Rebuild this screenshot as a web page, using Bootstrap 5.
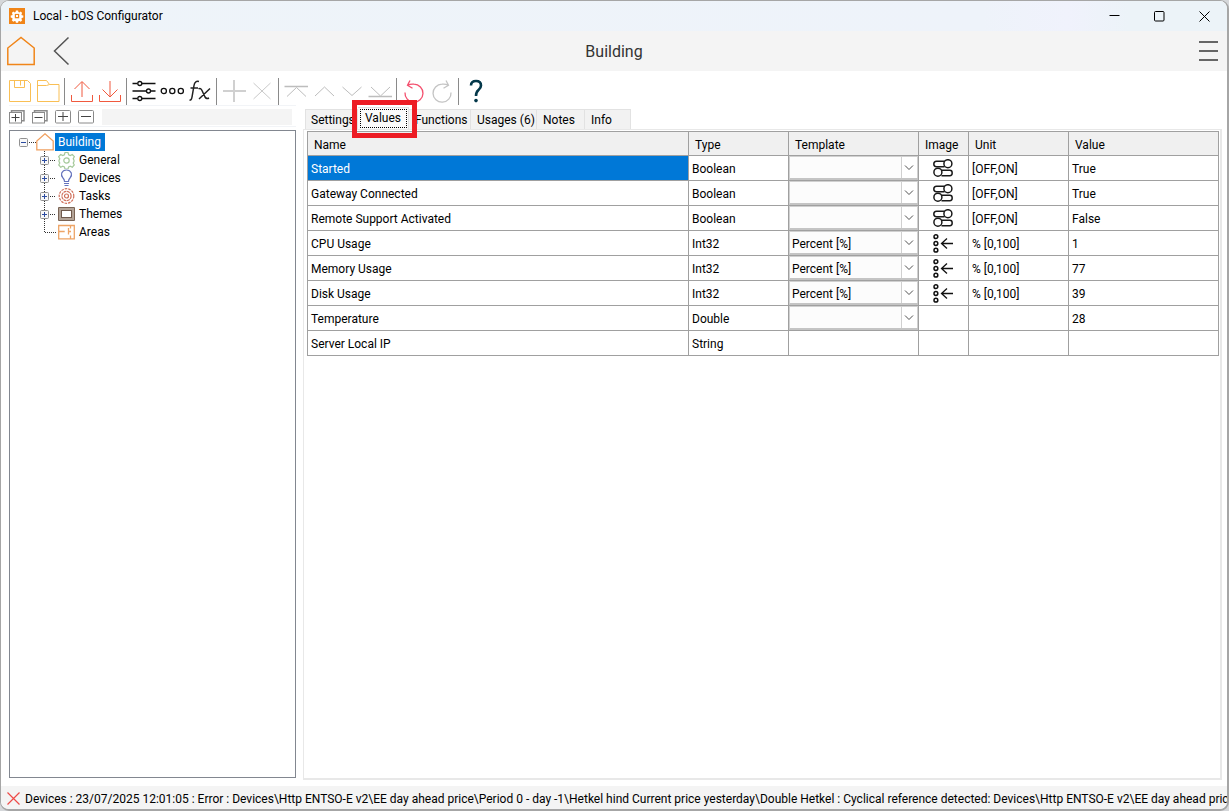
<!DOCTYPE html>
<html lang="en">
<head>
<meta charset="utf-8">
<meta name="viewport" content="width=device-width, initial-scale=1">
<title>Local - bOS Configurator</title>
<link href="https://cdn.jsdelivr.net/npm/bootstrap@5.3.0/dist/css/bootstrap.min.css" rel="stylesheet">
<style>
  :root { --line: #a0a0a0; --accent: #0078d7; --chrome: #f4f4f4; }
  body { font-family: Roboto, "Open Sans", sans-serif; font-size: 12px; line-height: 16px; color: #000; background: #d5d7da; }
  svg { display: block; fill: none; flex: none; }
  .app-window { border: 1px solid #a6a6a6; border-width: 1px 2px 2px 1px; border-radius: 9px; background: #fff; }
  .title-bar { height: 30px; background: linear-gradient(90deg, #eef4f9, #eef3fa 80%, #f0f2fc 87%, #ecf3f8 92%); padding-left: 8px; }
  .win-btn { width: 45px; height: 29px; }
  .plain-btn { border: 0; background: none; padding: 0; display: flex; align-items: center; justify-content: center; color: inherit; }
  .head-bar { height: 40px; background: var(--chrome); padding: 0 5px; display: grid; grid-template-columns: 1fr auto 1fr; }
  .head-bar h1 { font-size: 16px; line-height: 24px; font-weight: 400; color: #333; padding-top: 2px; }
  .back-btn { margin-left: 16px; }
  .tool-bar { height: 34px; padding: 6px 0 0 5px; }
  .tool-bar button { width: 28px; height: 28px; }
  .tool-sep { width: 1px; height: 27px; background: #8a8a8a; margin: 0 3px 0 2px; }
  .side-pane { width: 295px; padding: 0 0 2px 8px; }
  .mini-bar { height: 22px; border-top: 1px solid #f2f4f7; border-bottom: 1px solid #f2f4f7; padding: 1px 4px 0 0; }
  .mini-bar button { width: 23px; height: 14px; justify-content: flex-start; }
  .filter-box { height: 16px; min-width: 0; border: 0; border-radius: 0; background: #f4f4f4; padding: 0 4px; margin-left: 1px; font-size: 12px; }
  .tree-box { border: 1px solid #828790; margin-top: 3px; padding: 2px 0 0 9px; }
  .tree-row { height: 18px; }
  .tree-label { padding: 0 4px 0 3px; line-height: 18px; color: #000; text-decoration: none; }
  .tree-label.selected { background: var(--accent); color: #fff; }
  .branch { padding-left: 21px; }
  .branch .tree-label { padding-left: 4px; }
  .work-area { min-height: 0; }
  .main-pane { min-width: 0; padding: 2px 5px 0 7px; }
  .tab-strip { height: 22px; padding-left: 2px; }
  .tab-strip .nav-link { height: 20px; padding: 0 0 0 6px; border: 1px solid #e2e2e2; border-left-width: 0; border-bottom: 0; border-radius: 0; background: #f2f2f2; color: #000; line-height: 20px; text-align: left; }
  .tab-strip .nav-link.first-tab { border-left-width: 1px; padding-left: 5px; }
  .tab-strip .nav-link.active { height: 22px; background: #fbfbfb; color: #000; padding-left: 2px; padding-bottom: 1px; }
  .tab-strip .focus-box { border: 1px dotted #000; height: 19px; line-height: 17px; padding: 0 4px; width: 47px; }
  .w-set { width: 53px; } .w-val { width: 51px; } .w-fun { width: 62px; } .w-usa { width: 66px; } .w-not { width: 48px; } .w-inf { width: 46px; }
  .highlight-frame { position: absolute; left: 49px; top: -7px; width: 65px; height: 38px; border: 5px solid #ed1c24; pointer-events: none; z-index: 2; }
  .sheet { border: 2px solid #e8e8e8; border-width: 1px 2px 2px 1px; background: #fff; padding: 1px 1px 0 3px; }
  .values-table { table-layout: fixed; width: 100%; border-collapse: collapse; }
  .values-table th { height: 24px; background: #f0f0f0; font-weight: 400; padding: 2px 0 0 6px; border: 1px solid var(--line); }
  .values-table td { height: 25px; padding: 2px 3px 0; border: 1px solid var(--line); white-space: nowrap; }
  .values-table tr.picked td:first-child { background: var(--accent); color: #fff; }
  .values-table td.cell-select { padding: 0; vertical-align: top; }
  .values-table td.cell-icon { padding: 0 4px 0 3px; }
  .values-table td svg { margin: 0 auto; }
  .c-type, .c-unit { width: 100px; } .c-tmpl { width: 130px; } .c-img { width: 50px; } .c-val { width: 150px; }
  .cell-select .form-select {
    --bs-form-select-bg-img: url("data:image/svg+xml,%3csvg xmlns='http://www.w3.org/2000/svg' width='17' height='22'%3e%3cpath fill='%23fff' d='M0 0h17v21H0z'/%3e%3cpath fill='none' stroke='%23d0d0d0' d='M.5 0v21M16.5 0v21'/%3e%3cpath fill='none' stroke='%23b8b8b8' d='M0 21.5h17'/%3e%3cpath fill='none' stroke='%23505050' d='M4 8.500l4 4 4-4'/%3e%3c/svg%3e");
    background-size: 17px 22px; background-position: right 0 top 0; background-color: #fcfcfc;
    height: 24px; border: 1px solid #d0d0d0; border-bottom: 2px solid #c4c4c4; border-right-width: 0; border-radius: 0; padding: 2px 18px 0 2px; font-size: 12px; line-height: 20px; color: #000; }
  .status-bar { height: 23px; background: var(--chrome); padding: 2px 0 0 6px; white-space: nowrap; margin-top: 6px; border-radius: 0 0 8px 8px; }
  .status-bar svg { margin-right: 5px; }
</style>
</head>
<body>
<svg width="0" height="0" class="position-absolute" aria-hidden="true">
  <symbol id="i-toggle" viewBox="0 0 20 18"><g fill="none" stroke="#1a1a1a" stroke-width="1.500"><path d="M11.500 2.300H3.500Q.8 2.300.8 5T3.500 7.700h8M8.500 11.300h8.300q2.400 0 2.400 2.700t-2.400 2.700H8.500"/><circle cx="14.900" cy="4.700" r="4"/><circle cx="4.900" cy="13.200" r="4"/></g></symbol>
  <symbol id="i-level" viewBox="0 0 20 19"><g fill="none" stroke="#111" stroke-width="1.500"><circle cx="2.900" cy="2.700" r="1.900"/><circle cx="2.900" cy="9.500" r="1.900"/><circle cx="2.900" cy="16.200" r="1.900"/><path d="M20 9.500H8.500M14 4.500L8.500 9.500l5.500 5" stroke-width="1.300"/></g></symbol>
  <symbol id="i-open" viewBox="0 0 18 18"><path d="M4.500 0v18M10 9.500h6" stroke="#333" stroke-dasharray="1 1"/><rect x=".5" y="5.500" width="8" height="8" rx="1" fill="#f8f8f8" stroke="#919191"/><path d="M2 9.500h5M4.500 7v5" stroke="#2b4ba0"/></symbol>
</svg>

<div class="app-window vh-100 d-flex flex-column overflow-hidden">
  <header class="title-bar d-flex align-items-center">
    <svg width="16" height="16" viewBox="0 0 16 16"><rect width="16" height="16" fill="#f08519"/><path d="M6.900 2.500h2.200l.3 1.500 1 .4 1.300-.9 1.500 1.500-.8 1.300.4 1 1.500.2v2.100l-1.500.3-.4 1 .8 1.300-1.500 1.500-1.300-.8-1 .4-.3 1.400H6.900l-.3-1.400-1-.4-1.300.8-1.500-1.500.8-1.300-.4-1-1.500-.3V7.500l1.500-.2.4-1-.8-1.300 1.500-1.500 1.300.9 1-.4z" fill="#fff"/><rect x="5.800" y="5.900" width="4.400" height="4.400" fill="#f08519"/><rect x="7" y="7" width="2" height="2" fill="#fff"/></svg>
    <span class="ms-1 ps-1 me-auto">Local - bOS Configurator</span>
    <button class="plain-btn win-btn" aria-label="Minimize"><svg width="11" height="11" stroke="#000"><path d="M.5 4.500h10"/></svg></button>
    <button class="plain-btn win-btn" aria-label="Maximize"><svg width="11" height="11" stroke="#000"><rect x=".5" y=".5" width="9.500" height="9.500" rx="1"/></svg></button>
    <button class="plain-btn win-btn" aria-label="Close"><svg width="11" height="11" stroke="#000"><path d="M.5.5l10 10M10.500.5l-10 10"/></svg></button>
  </header>

  <div class="head-bar align-items-center">
    <div class="d-flex align-items-center">
      <button class="plain-btn" aria-label="Home"><svg width="30" height="30" stroke="#f08519" stroke-width="1.500"><path d="M1.800 28.500V12L15 1.500 28.200 12v16.500z"/></svg></button>
      <button class="plain-btn back-btn" aria-label="Back"><svg width="20" height="30" stroke="#555" stroke-width="1.500"><path d="M16.500 1.500L2.500 15l14 13.500"/></svg></button>
    </div>
    <h1 class="m-0">Building</h1>
    <button class="plain-btn ms-auto me-1" aria-label="Menu"><svg width="20" height="24" stroke="#666" stroke-width="2"><path d="M1 3h19M1 12h19M1 21h19"/></svg></button>
  </div>

  <div class="tool-bar d-flex align-items-center" role="toolbar">
    <button class="plain-btn" aria-label="Save"><svg width="28" height="28" stroke="#f9bf55"><path d="M3.500 3.500h18l3 3v18h-21zM8.500 3.500v7h10v-7M14.500 3.500v5"/></svg></button>
    <button class="plain-btn" aria-label="Open"><svg width="28" height="28" stroke="#f9bf55"><path d="M3.500 24.500v-21h9l3 4h9.500v17zM3.500 8.500h9l3-1" /></svg></button>
    <span class="tool-sep"></span>
    <button class="plain-btn" aria-label="Upload"><svg width="28" height="28" stroke="#f0593e"><path d="M3.500 18v6.500h21V18M14 20V5M6.500 12L14 4.500l7.500 7.500"/></svg></button>
    <button class="plain-btn" aria-label="Download"><svg width="28" height="28" stroke="#f0593e"><path d="M3.500 18v6.500h21V18M14 4v16M6.500 12.500L14 20l7.500-7.500"/></svg></button>
    <span class="tool-sep"></span>
    <button class="plain-btn" aria-label="Parameters"><svg width="28" height="28" stroke="#111" stroke-width="1.300"><path d="M2.500 6.500h5M12 6.500h13.500M2.500 14h13.500M21 14h4.500M2.500 21.500h5M12 21.500h13.500"/><circle cx="9.800" cy="6.500" r="2"/><circle cx="18.500" cy="14" r="2"/><circle cx="9.800" cy="21.500" r="2"/></svg></button>
    <button class="plain-btn" aria-label="More"><svg width="28" height="28" stroke="#111" stroke-width="1.300"><circle cx="5.800" cy="14" r="2.600"/><circle cx="14.300" cy="14" r="2.600"/><circle cx="22.800" cy="14" r="2.600"/></svg></button>
    <button class="plain-btn" aria-label="Function"><svg width="28" height="28" stroke="#222" stroke-width="1.500"><path d="M13 4.500Q8.800 3.500 8 8.500L6 20q-.5 3.500-2.500 3M4.500 11h7.500M12.500 12q2-1.500 3.500 1.500l3 6.500q1.500 2.500 4 1M24 11.500L13 22"/></svg></button>
    <span class="tool-sep"></span>
    <button class="plain-btn" aria-label="Add"><svg width="28" height="28" stroke="#d0d0d0" stroke-width="2"><path d="M14 3v22M3 14h23" /></svg></button>
    <button class="plain-btn" aria-label="Delete"><svg width="28" height="28" stroke="#c9c9c9"><path d="M5.500 6l17 16M22.500 6l-17 16"/></svg></button>
    <span class="tool-sep"></span>
    <button class="plain-btn" aria-label="Move to top"><svg width="28" height="28" stroke="#bdbdbd"><path d="M2.500 9.500H26" stroke-width="1.500"/><path d="M5 19.500l9.500-9 9.500 9"/></svg></button>
    <button class="plain-btn" aria-label="Move up"><svg width="28" height="28" stroke="#bdbdbd"><path d="M5 19l9.500-9 9.500 9"/></svg></button>
    <button class="plain-btn" aria-label="Move down"><svg width="28" height="28" stroke="#bdbdbd"><path d="M4.500 10l9.500 8.500 9.500-8.500"/></svg></button>
    <button class="plain-btn" aria-label="Move to bottom"><svg width="28" height="28" stroke="#bdbdbd"><path d="M2.500 19.500H26" stroke-width="1.500"/><path d="M5 10l9.500 9 9.500-9"/></svg></button>
    <span class="tool-sep"></span>
    <button class="plain-btn" aria-label="Undo"><svg width="28" height="28" stroke="#f4506e" stroke-width="1.300"><path d="M7.500 8.200Q10.500 6.800 14 7.200A9 9 0 1 1 5 15.500M10 3.500L7.500 8.200l5 3"/></svg></button>
    <button class="plain-btn" aria-label="Redo"><svg width="28" height="28" stroke="#c4c4c4" stroke-width="1.300"><path d="M20.500 8.200Q17.500 6.800 14 7.200A9 9 0 1 0 23 15.500M18 3.500l2.500 4.700-5 3"/></svg></button>
    <span class="tool-sep"></span>
    <button class="plain-btn" aria-label="Help"><svg width="28" height="28" stroke="#04384a" stroke-width="2.600"><path d="M9 8.500q0-4.500 5-4.500t5 4.500q0 2.500-2.500 4.500t-2.500 6"/><circle cx="14" cy="23.600" r="1.800" fill="#04384a" stroke="none"/></svg></button>
  </div>

  <div class="work-area d-flex flex-grow-1">
    <aside class="side-pane d-flex flex-column flex-shrink-0">
      <div class="mini-bar d-flex align-items-center">
        <button class="plain-btn" aria-label="Expand all"><svg width="17" height="14" stroke="#8a8a8a"><path d="M2.500 2V.8h12.500v10h-2" stroke-width="1.500"/><rect x=".5" y="2.500" width="12" height="10.500"/><path d="M2.500 7.500h8M6.500 4v7.500" stroke="#444"/></svg></button>
        <button class="plain-btn" aria-label="Collapse all"><svg width="17" height="14" stroke="#8a8a8a"><path d="M2.500 2V.8h12.500v10h-2" stroke-width="1.500"/><rect x=".5" y="2.500" width="12" height="10.500"/><path d="M2.500 7.500h8" stroke="#444"/></svg></button>
        <button class="plain-btn" aria-label="Expand"><svg width="17" height="14" stroke="#8a8a8a"><rect x=".5" y=".5" width="15" height="12.500" rx="1"/><path d="M3 6.500h10M8 2v9" stroke="#444"/></svg></button>
        <button class="plain-btn" aria-label="Collapse"><svg width="17" height="14" stroke="#8a8a8a"><rect x=".5" y=".5" width="15" height="12.500" rx="1"/><path d="M3 6.500h10" stroke="#444"/></svg></button>
        <input class="filter-box flex-grow-1" type="text" aria-label="Filter">
      </div>
      <nav class="tree-box flex-grow-1" aria-label="Project tree">
        <div class="tree-row d-flex align-items-center">
          <button class="plain-btn" aria-label="Collapse Building"><svg width="17" height="18"><path d="M10 9.500h7" stroke="#333" stroke-dasharray="1 1"/><rect x=".5" y="5.500" width="8" height="8" rx="1" fill="#f8f8f8" stroke="#919191"/><path d="M2 9.500h5" stroke="#2b4ba0"/></svg></button>
          <svg width="19" height="18" stroke="#f0a060" stroke-width="1.300"><path d="M.8 16.800V8L9 .8 17.200 8v8.800z"/></svg>
          <a class="tree-label selected" href="#">Building</a>
        </div>
        <ul class="branch list-unstyled m-0">
          <li class="tree-row d-flex align-items-center"><button class="plain-btn" aria-label="Expand General"><svg width="18" height="18"><use href="#i-open"/></svg></button><svg width="17" height="18" stroke="#a5c99a" stroke-width="1.200"><path d="M7 1.500h3l.6 2.200 1.700.8 2-1 2 2.200-1.100 2 .8 1.500v1.400l-.8 1.400 1.100 2-2 2.200-2-1-1.700.8-.6 2H7l-.6-2-1.700-.8-2 1-2-2.200 1.100-2-.8-1.400V9.200l.8-1.500-1.100-2 2-2.200 2 1 1.700-.8z"/><circle cx="8.500" cy="9.500" r="2.700"/></svg><a class="tree-label" href="#">General</a></li>
          <li class="tree-row d-flex align-items-center"><button class="plain-btn" aria-label="Expand Devices"><svg width="18" height="18"><use href="#i-open"/></svg></button><svg width="17" height="18" stroke="#6573bd" stroke-width="1.200"><path d="M6.500 12.500Q6.500 10.500 5 9 2.800 6.500 3.700 4 5 1 8.500 1t4.800 3Q14.200 6.500 12 9q-1.500 1.500-1.500 3.500zM6 14.500h5M6.500 16.500h4"/></svg><a class="tree-label" href="#">Devices</a></li>
          <li class="tree-row d-flex align-items-center"><button class="plain-btn" aria-label="Expand Tasks"><svg width="18" height="18"><use href="#i-open"/></svg></button><svg width="17" height="18" stroke="#d0715c" stroke-width="1.200"><circle cx="8.500" cy="9" r="7.300" stroke-dasharray="2.600 1"/><circle cx="8.500" cy="9" r="4.600" stroke-dasharray="3 .6"/><circle cx="8.500" cy="9" r="2"/></svg><a class="tree-label" href="#">Tasks</a></li>
          <li class="tree-row d-flex align-items-center"><button class="plain-btn" aria-label="Expand Themes"><svg width="18" height="18"><use href="#i-open"/></svg></button><svg width="17" height="18"><rect x="2" y="4" width="13" height="10" stroke="#b3a498" stroke-width="2"/><path d="M.5 2.500h16v13H.5z" stroke="#7a6455"/><rect x="3.500" y="5.500" width="10" height="7" stroke="#6f5a4d"/></svg><a class="tree-label" href="#">Themes</a></li>
          <li class="tree-row d-flex align-items-center"><svg width="18" height="18"><path d="M4.500 0v10M5 9.500h11" stroke="#333" stroke-dasharray="1 1"/></svg><svg width="17" height="18" stroke="#eda466" stroke-width="1.300"><path d="M.7 2.500h15.600v13.300H.7zM.7 8.500h6M10.500 5v6.500M10.500 8.500h2.500M12.500 2.500v3M12.500 12.500v3"/></svg><a class="tree-label" href="#">Areas</a></li>
        </ul>
      </nav>
    </aside>

    <main class="main-pane d-flex flex-column flex-grow-1">
      <div class="tab-strip nav position-relative align-items-end" role="tablist">
        <button class="nav-link first-tab w-set" role="tab">Settings</button>
        <button class="nav-link active w-val" role="tab" aria-selected="true"><span class="focus-box d-block">Values</span></button>
        <button class="nav-link w-fun" role="tab">Functions</button>
        <button class="nav-link w-usa" role="tab">Usages (6)</button>
        <button class="nav-link w-not" role="tab">Notes</button>
        <button class="nav-link w-inf" role="tab">Info</button>
        <span class="highlight-frame"></span>
      </div>
      <div class="sheet flex-grow-1">
        <table class="values-table">
          <colgroup><col><col class="c-type"><col class="c-tmpl"><col class="c-img"><col class="c-unit"><col class="c-val"></colgroup>
          <thead><tr><th>Name</th><th>Type</th><th>Template</th><th>Image</th><th>Unit</th><th>Value</th></tr></thead>
          <tbody>
            <tr class="picked"><td>Started</td><td>Boolean</td><td class="cell-select"><select class="form-select" aria-label="Started template"><option></option></select></td><td class="cell-icon"><svg width="20" height="18"><use href="#i-toggle"/></svg></td><td>[OFF,ON]</td><td>True</td></tr>
            <tr><td>Gateway Connected</td><td>Boolean</td><td class="cell-select"><select class="form-select" aria-label="Gateway Connected template"><option></option></select></td><td class="cell-icon"><svg width="20" height="18"><use href="#i-toggle"/></svg></td><td>[OFF,ON]</td><td>True</td></tr>
            <tr><td>Remote Support Activated</td><td>Boolean</td><td class="cell-select"><select class="form-select" aria-label="Remote Support Activated template"><option></option></select></td><td class="cell-icon"><svg width="20" height="18"><use href="#i-toggle"/></svg></td><td>[OFF,ON]</td><td>False</td></tr>
            <tr><td>CPU Usage</td><td>Int32</td><td class="cell-select"><select class="form-select" aria-label="CPU Usage template"><option>Percent [%]</option></select></td><td class="cell-icon"><svg width="20" height="19"><use href="#i-level"/></svg></td><td>% [0,100]</td><td>1</td></tr>
            <tr><td>Memory Usage</td><td>Int32</td><td class="cell-select"><select class="form-select" aria-label="Memory Usage template"><option>Percent [%]</option></select></td><td class="cell-icon"><svg width="20" height="19"><use href="#i-level"/></svg></td><td>% [0,100]</td><td>77</td></tr>
            <tr><td>Disk Usage</td><td>Int32</td><td class="cell-select"><select class="form-select" aria-label="Disk Usage template"><option>Percent [%]</option></select></td><td class="cell-icon"><svg width="20" height="19"><use href="#i-level"/></svg></td><td>% [0,100]</td><td>39</td></tr>
            <tr><td>Temperature</td><td>Double</td><td class="cell-select"><select class="form-select" aria-label="Temperature template"><option></option></select></td><td></td><td></td><td>28</td></tr>
            <tr><td>Server Local IP</td><td>String</td><td></td><td></td><td></td><td></td></tr>
          </tbody>
        </table>
      </div>
    </main>
  </div>

  <footer class="status-bar d-flex align-items-center overflow-hidden">
    <svg width="13" height="13" stroke="#ee4b48" stroke-width="1.200"><path d="M.5.5l12 12M12.500.5l-12 12"/></svg>
    <span>Devices : 23/07/2025 12:01:05 : Error : Devices\Http ENTSO-E v2\EE day ahead price\Period 0 - day -1\Hetkel hind Current price yesterday\Double Hetkel : Cyclical reference detected: Devices\Http ENTSO-E v2\EE day ahead price\P</span>
  </footer>
</div>
<script src="https://cdn.jsdelivr.net/npm/bootstrap@5.3.0/dist/js/bootstrap.bundle.min.js"></script>
</body>
</html>
